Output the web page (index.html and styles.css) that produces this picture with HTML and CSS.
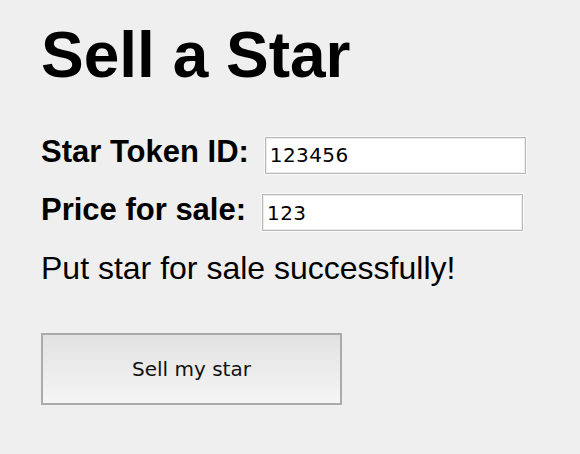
FILE: index.html
```html
<!DOCTYPE html>
<html lang="en">
<head>
<meta charset="utf-8">
<title>Sell a Star</title>
<link rel="stylesheet" href="styles.css">
</head>
<body>
<main class="page">
  <h1 class="title">Sell a Star</h1>
  <div class="field field-first">
    <label class="field-label" for="token">Star Token ID:</label>
    <input class="field-input" id="token" type="text" value="123456">
  </div>
  <div class="field">
    <label class="field-label" for="price">Price for sale:</label>
    <input class="field-input" id="price" type="text" value="123">
  </div>
  <p class="status">Put star for sale successfully!</p>
  <button class="sell-btn" type="button">Sell my star</button>
</main>
</body>
</html>
```
FILE: styles.css
```css
html, body {
  margin: 0;
  padding: 0;
  background: #efefef;
}

.page {
  padding: 18px 0 0 41px;
  font-family: "Liberation Sans", Arial, sans-serif;
  color: #000;
}

.title {
  margin: 0;
  font-size: 64px;
  font-weight: bold;
  line-height: normal;
}

.field {
  display: flex;
  align-items: baseline;
  gap: 16px;
  margin-top: 18px;
}

.field-first {
  margin-top: 42px;
}

.field-label {
  font-size: 31px;
  font-weight: bold;
  line-height: normal;
}

.field-input {
  box-sizing: border-box;
  width: 261px;
  height: 37px;
  margin: 0;
  padding: 0 4px;
  border: 1px solid #b9b9b9;
  background: #fff;
  box-shadow: 0 0 0 1px #fafafa, inset 0 0 0 1px #ececec;
  font-family: "DejaVu Sans", sans-serif;
  font-size: 20px;
  letter-spacing: 0.4px;
  color: #000;
  outline: none;
}

.status {
  margin: 19px 0 0;
  font-size: 32px;
  line-height: normal;
}

.sell-btn {
  display: block;
  box-sizing: border-box;
  width: 301px;
  height: 72px;
  margin-top: 46px;
  padding: 0;
  border: 2px solid #ababab;
  background: linear-gradient(#e2e2e2, #f5f5f5);
  font-family: "DejaVu Sans", sans-serif;
  font-size: 20px;
  color: #111;
}
```
